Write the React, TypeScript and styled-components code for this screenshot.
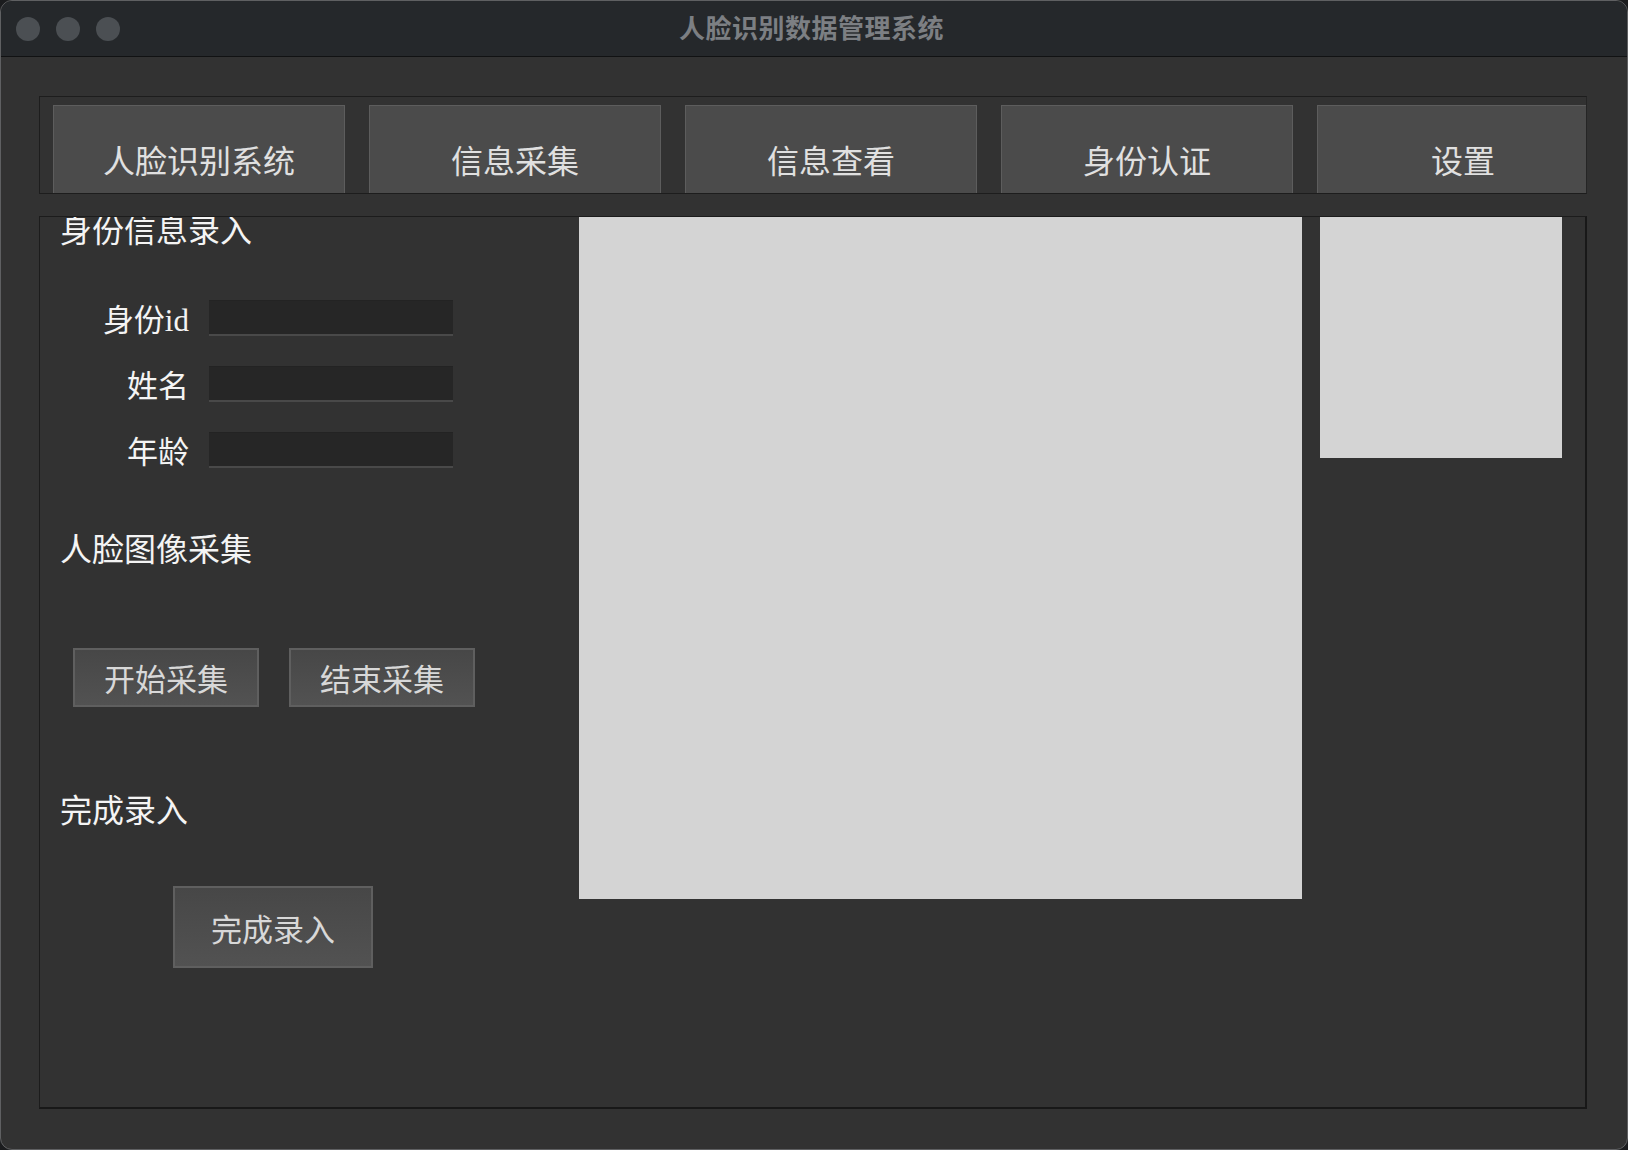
import styled, { createGlobalStyle } from 'styled-components';

const GlobalStyle = createGlobalStyle`
	html, body {
		margin: 0;
		padding: 0;
		background: #1b1c1e;
	}
	* {
		box-sizing: border-box;
	}
`;

const Window = styled.div`
	width: 1628px;
	height: 1150px;
	border: 1px solid #5f6062;
	border-radius: 12px;
	overflow: hidden;
	background: #323232;
	display: flex;
	flex-direction: column;
	font-family: 'Noto Sans CJK SC', sans-serif;
`;

const TitleBar = styled.header`
	height: 56px;
	flex-shrink: 0;
	background: #25282b;
	border-bottom: 1px solid #111213;
	display: grid;
	grid-template-columns: 1fr auto 1fr;
	align-items: center;
	padding: 0 15px;
`;

const Lights = styled.div`
	display: flex;
	gap: 16px;
`;

const Light = styled.span`
	width: 24px;
	height: 24px;
	border-radius: 50%;
	background: #4b4f53;
`;

const WindowTitle = styled.h1`
	margin: 0 5px 4px 0;
	font-size: 26px;
	font-weight: 700;
	color: #7c7f83;
	letter-spacing: 0.5px;
`;

const Content = styled.main`
	flex: 1;
	display: flex;
	flex-direction: column;
	gap: 22px;
	padding: 39px 40px 40px 38px;
`;

const TabBar = styled.nav`
	height: 98px;
	border: 1px solid #1d1d1d;
	border-right-color: #252525;
	padding: 8px 0 0 13px;
	overflow: hidden;
	display: flex;
	gap: 24px;
	align-items: flex-start;
`;

const Tab = styled.button`
	flex: 0 0 292px;
	height: 90px;
	background: #4b4b4b;
	border: 1px solid #5d5d5d;
	border-bottom-color: #555;
	color: #e0e0e0;
	font-family: 'Noto Sans CJK SC', sans-serif;
	font-size: 32px;
	padding: 18px 0 0;
	display: flex;
	align-items: center;
	justify-content: center;
`;

const Panel = styled.section`
	flex: 1;
	border-top: 1px solid #1c1c1c;
	border-left: 1px solid #1c1c1c;
	border-right: 2px solid #181818;
	border-bottom: 2px solid #181818;
	overflow: hidden;
	display: grid;
	grid-template-columns: 521px 723px 242px;
	column-gap: 18px;
	align-items: start;
`;

const Form = styled.div`
	display: flex;
	flex-direction: column;
	padding-left: 20px;
`;

const SectionTitle = styled.h2<{ $gap: number }>`
	margin: ${(p) => p.$gap}px 0 0;
	font-family: 'Liberation Serif', 'Noto Sans CJK SC', serif;
	font-size: 32px;
	font-weight: 400;
	line-height: 40px;
	color: #f4f4f4;
	white-space: nowrap;
`;

const Fields = styled.div`
	margin-top: 49px;
	margin-left: -20px;
	display: grid;
	grid-template-columns: 149px 244px;
	column-gap: 20px;
	row-gap: 30px;
	align-items: center;
`;

const Label = styled.label`
	font-family: 'Liberation Serif', 'Noto Sans CJK SC', serif;
	font-size: 31px;
	line-height: 30px;
	height: 36px;
	color: #f4f4f4;
	text-align: right;
	padding-top: 6px;
	white-space: nowrap;
`;

const Input = styled.input`
	height: 36px;
	width: 244px;
	background: #262626;
	border: none;
	border-top: 1px solid #232323;
	border-bottom: 2px solid #494949;
	color: #eee;
	font-size: 20px;
	padding: 0 6px;
	&:focus {
		outline: none;
	}
`;

const ButtonRow = styled.div`
	margin-top: 78px;
	margin-left: 13px;
	display: flex;
	gap: 30px;
`;

const ActionButton = styled.button<{ $w: number; $h: number }>`
	width: ${(p) => p.$w}px;
	height: ${(p) => p.$h}px;
	background: linear-gradient(#474747, #525252);
	border: 2px solid #5f5f5f;
	color: #d8d8d8;
	font-family: 'Noto Sans CJK SC', sans-serif;
	font-size: 31px;
	padding: 0;
	display: flex;
	align-items: center;
	justify-content: center;
`;

const FinishWrap = styled.div`
	margin-top: 55px;
	margin-left: 113px;
`;

const Preview = styled.div<{ $h: number }>`
	height: ${(p) => p.$h}px;
	background: #d4d4d4;
`;

const tabs = ['人脸识别系统', '信息采集', '信息查看', '身份认证', '设置'];
const fields = ['身份id', '姓名', '年龄'];

function App() {
	return (
		<>
			<GlobalStyle />
			<Window>
				<TitleBar>
					<Lights>
						<Light />
						<Light />
						<Light />
					</Lights>
					<WindowTitle>人脸识别数据管理系统</WindowTitle>
					<div />
				</TitleBar>
				<Content>
					<TabBar>
						{tabs.map((t) => (
							<Tab key={t}>{t}</Tab>
						))}
					</TabBar>
					<Panel>
						<Form>
							<SectionTitle $gap={-6}>身份信息录入</SectionTitle>
							<Fields>
								{fields.flatMap((f) => [
									<Label key={f + '-l'}>{f}</Label>,
									<Input key={f + '-i'} type="text" />,
								])}
							</Fields>
							<SectionTitle $gap={62}>人脸图像采集</SectionTitle>
							<ButtonRow>
								<ActionButton $w={186} $h={59}>开始采集</ActionButton>
								<ActionButton $w={186} $h={59}>结束采集</ActionButton>
							</ButtonRow>
							<SectionTitle $gap={84}>完成录入</SectionTitle>
							<FinishWrap>
								<ActionButton $w={200} $h={82}>完成录入</ActionButton>
							</FinishWrap>
						</Form>
						<Preview $h={682} />
						<Preview $h={241} />
					</Panel>
				</Content>
			</Window>
		</>
	);
}

export default App;
